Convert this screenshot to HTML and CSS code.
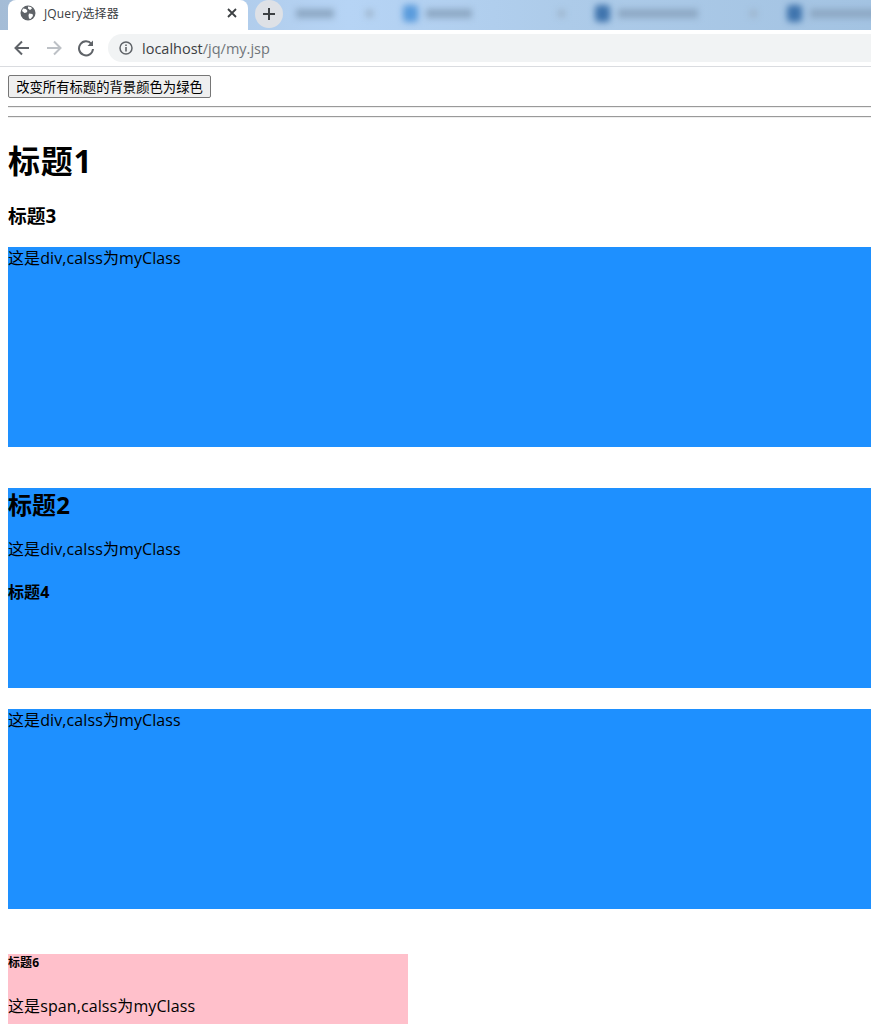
FILE: index.html
```html
<!DOCTYPE html>
<html lang="zh-CN">
<head>
  <meta charset="UTF-8">
  <title>JQuery选择器</title>
  <link rel="stylesheet" href="styles.css">
</head>
<body>
  <div class="chrome">
    <div class="tabstrip">
      <div class="tab">
        <svg class="globe" width="16" height="16" viewBox="0 0 16 16"><circle cx="8" cy="8" r="7.500" fill="#5f6368"/><path d="M3 3.500l3 .5 1.500 2-1 1.500-2 .5-2.500-2zM8 1.500l3 .5 1 1.500-2 1.500-2-1.500zM9 8.500l3.500.5.500 2-2.500 3-1.500-.5-.5-3z" fill="#fff"/></svg>
        <span class="tab-title">JQuery选择器</span>
        <svg class="tab-close" width="10" height="10" viewBox="0 0 10 10"><path d="M1 1l8 8M9 1l-8 8" stroke="#3c4043" stroke-width="1.800"/></svg>
      </div>
      <div class="newtab">
        <svg width="14" height="14" viewBox="0 0 14 14"><path d="M7 1v12M1 7h12" stroke="#3c4043" stroke-width="2"/></svg>
      </div>
      <div class="blurred-tabs">
        <div class="blur-tab first-blur"><i class="blur-text short"></i><i class="blur-x"></i></div>
        <div class="blur-tab"><i class="blur-icon light"></i><i class="blur-text"></i><i class="blur-x"></i></div>
        <div class="blur-tab"><i class="blur-icon"></i><i class="blur-text long"></i><i class="blur-x"></i></div>
        <div class="blur-tab"><i class="blur-icon"></i><i class="blur-text long"></i></div>
      </div>
    </div>
    <div class="toolbar">
      <svg width="18" height="18" viewBox="0 0 18 18"><path d="M16 9H3M9 2.500L2.500 9 9 15.500" fill="none" stroke="#5f6368" stroke-width="2"/></svg>
      <svg width="18" height="18" viewBox="0 0 18 18"><path d="M2 9h13M9 2.500L15.500 9 9 15.500" fill="none" stroke="#bdc1c6" stroke-width="2"/></svg>
      <svg width="18" height="18" viewBox="0 0 18 18"><path d="M14.500 5A7 7 0 1 0 16 10" fill="none" stroke="#5f6368" stroke-width="2"/><path d="M16 1.500V7h-5.500z" fill="#5f6368"/></svg>
      <div class="omnibox">
        <svg width="14" height="14" viewBox="0 0 14 14"><circle cx="7" cy="7" r="6" fill="none" stroke="#5f6368" stroke-width="1.500"/><path d="M7 6v4.500M7 3.500v1.500" stroke="#5f6368" stroke-width="1.600"/></svg>
        <span class="url">localhost<span class="url-path">/jq/my.jsp</span></span>
      </div>
    </div>
  </div>

  <div class="page">
    <button class="change-btn">改变所有标题的背景颜色为绿色</button>
    <hr>
    <hr>
    <h1>标题1</h1>
    <h3>标题3</h3>
    <div class="myClass first">这是div,calss为myClass</div>
    <div class="myClass second">
      <h2>标题2</h2>
      <p>这是div,calss为myClass</p>
      <h4>标题4</h4>
    </div>
    <div class="myClass third">这是div,calss为myClass</div>
    <div class="pink">
      <h6>标题6</h6>
      <p>这是span,calss为myClass</p>
    </div>
  </div>
</body>
</html>
```

FILE: styles.css
```css
html, body { margin: 0; padding: 0; background: #fff; }
body { font-family: "Open Sans", "Noto Sans CJK SC", sans-serif; font-size: 16px; line-height: 23px; color: #000; overflow: hidden; }

.chrome { height: 67px; border-bottom: 1px solid #dadce0; box-sizing: border-box; }
.tabstrip { height: 30px; display: flex; background: linear-gradient(90deg, #a4bcd6 0%, #b6d4f5 40%, #adcbe9 65%, #a3c3e2 100%); overflow: hidden; }
.tab { width: 240px; margin-left: 8px; height: 30px; background: #fff; border-radius: 8px 8px 0 0; display: flex; align-items: center; flex-shrink: 0; box-sizing: border-box; padding: 0 10px 4px 12px; }
.tab-title { font-size: 12px; letter-spacing: .15px; color: #3c4043; margin-left: 8px; flex: 1; }
.tab-close { margin-right: 1px; }
.newtab { width: 28px; height: 28px; margin: 0 0 0 7px; border-radius: 50%; background: #dee1e6; display: flex; align-items: center; justify-content: center; flex-shrink: 0; }
.blurred-tabs { display: flex; flex: 1; filter: blur(3px); }
.blur-tab { width: 192px; flex-shrink: 0; height: 26px; display: flex; align-items: center; gap: 8px; padding-left: 8px; box-sizing: border-box; }
.first-blur { width: 112px; padding-left: 13px; }
.blur-icon { width: 15px; height: 17px; border-radius: 4px; background: #3f74ad; }
.blur-icon.light { background: #5a9bdc; }
.blur-text { width: 46px; height: 9px; background: #8da8c4; }
.blur-text.short { width: 38px; }
.blur-text.long { width: 80px; }
.blur-x { width: 7px; height: 7px; background: #9db4cb; margin-left: auto; margin-right: 22px; }

.toolbar { height: 36px; display: flex; align-items: center; gap: 14px; padding-left: 13px; background: #fff; }
.omnibox { flex: 1; height: 28px; background: #f1f3f4; border-radius: 14px 0 0 14px; display: flex; align-items: center; gap: 9px; padding-left: 11px; margin-left: -1px; }
.url { font-size: 14.500px; color: #3c4043; font-family: "Open Sans", sans-serif; }
.url-path { color: #70757a; }

.page { padding: 8px 0 8px 8px; }
.change-btn { display: block; height: 23px; width: 203px; padding: 0; font-family: "Noto Sans CJK SC", sans-serif; font-size: 13.330px; line-height: 16px; color: #000; background: #efefef; border: 1px solid #767676; border-radius: 2px; }
hr { margin: 8px 0; border: 0; border-top: 1px solid #9a9a9a; border-bottom: 1px solid #eee; height: 0; }
h1 { font-size: 32px; letter-spacing: .7px; line-height: 42px; margin: 22px 0 0; }
h3 { font-size: 18.720px; line-height: 25px; margin: 21px 0 19px; }
h2 { font-size: 24px; line-height: 34px; margin: 0 0 16px; }
h4 { font-size: 16px; line-height: 21px; margin: 21px 0 0; }
h6 { font-size: 12px; line-height: 18px; margin: 0; }
p { margin: 0; }

.myClass { background: #1e90ff; height: 200px; letter-spacing: .1px; }
.first { margin-bottom: 41px; }
.second { margin-bottom: 21px; }
.third { margin-bottom: 45px; }
.pink { background: #ffc0cb; width: 400px; height: 70px; letter-spacing: .1px; }
.pink p { margin-top: 23px; }
```
